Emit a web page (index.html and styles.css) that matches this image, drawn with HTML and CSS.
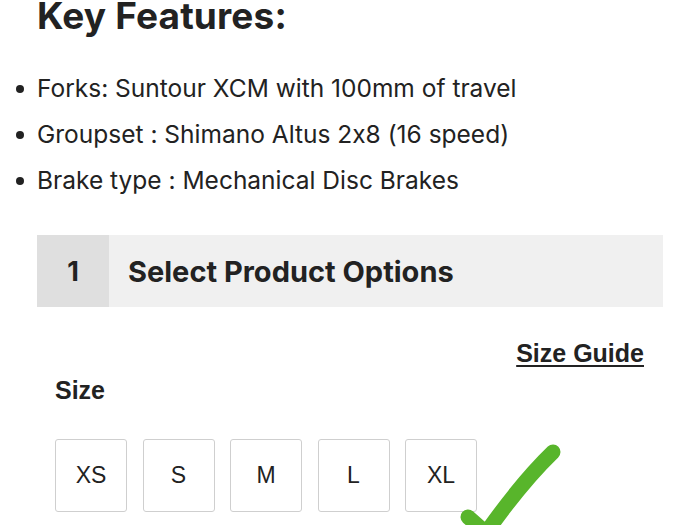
FILE: index.html
```html
<!DOCTYPE html>
<html>
<head>
<meta charset="utf-8">
<link rel="stylesheet" href="styles.css">
</head>
<body>
<div class="page">
  <h2 class="title">Key Features:</h2>
  <ul class="features">
    <li>Forks: Suntour XCM with 100mm of travel</li>
    <li>Groupset : Shimano Altus 2x8 (16 speed)</li>
    <li>Brake type : Mechanical Disc Brakes</li>
  </ul>
  <div class="step">
    <div class="step-num">1</div>
    <div class="step-title">Select Product Options</div>
  </div>
  <div class="options">
    <div class="guide-row"><a class="guide" href="#">Size Guide</a></div>
    <div class="label">Size</div>
    <div class="sizes">
      <div class="size">XS</div>
      <div class="size">S</div>
      <div class="size">M</div>
      <div class="size">L</div>
      <div class="size">XL</div>
    </div>
  </div>
</div>
<svg class="check" width="120" height="95" viewBox="0 0 120 95">
  <path d="M18 87 L34 101" stroke="#58b52b" stroke-width="15" stroke-linecap="round" fill="none"/>
  <path d="M103 22 Q72 52 38 100" stroke="#58b52b" stroke-width="15" stroke-linecap="round" fill="none"/>
</svg>
</body>
</html>
```
FILE: styles.css
```css
html, body {
  margin: 0;
  padding: 0;
  background: #fff;
  overflow: hidden;
}
body {
  width: 700px;
  height: 525px;
  position: relative;
  color: #222;
  font-family: Inter, "Noto Sans", sans-serif;
  font-feature-settings: "calt" 0;
}
.page {
  padding: 0 37px;
}
.title {
  margin: 0;
  font-size: 37px;
  line-height: 32px;
  font-weight: 700;
  letter-spacing: 0.15px;
}
.features {
  margin: 33px 0 0 0;
  padding: 0;
  list-style: none;
}
.features li {
  position: relative;
  font-size: 24.5px;
  line-height: 46px;
}
.features li::before {
  content: "";
  position: absolute;
  left: -21px;
  top: 20px;
  width: 8px;
  height: 8px;
  border-radius: 50%;
  background: #222;
}
.step {
  margin-top: 32px;
  display: flex;
  height: 72px;
  background: #f0f0f0;
}
.step-num {
  width: 72px;
  background: #dfdfdf;
  display: flex;
  align-items: center;
  justify-content: center;
  font-size: 27px;
  font-weight: 700;
}
.step-title {
  display: flex;
  align-items: center;
  padding-left: 19px;
  font-size: 29px;
  font-weight: 700;
}
.options {
  padding: 0 19px 0 18px;
  font-family: "Liberation Sans", Arial, sans-serif;
}
.guide-row {
  margin-top: 31px;
  display: flex;
  justify-content: flex-end;
  line-height: 30px;
}
.guide {
  color: #222;
  font-size: 25px;
  font-weight: 700;
  text-decoration: underline;
  text-decoration-thickness: 2px;
  text-underline-offset: 3px;
}
.label {
  margin-top: 7px;
  font-size: 25px;
  line-height: 30px;
  font-weight: 700;
}
.sizes {
  margin-top: 34px;
  display: flex;
  gap: 15.5px;
}
.size {
  width: 70px;
  height: 71px;
  border: 1px solid #cfcfcf;
  border-radius: 3px;
  display: flex;
  align-items: center;
  justify-content: center;
  font-size: 23px;
  color: #222;
}
.check {
  position: absolute;
  left: 450px;
  top: 430px;
}
```
